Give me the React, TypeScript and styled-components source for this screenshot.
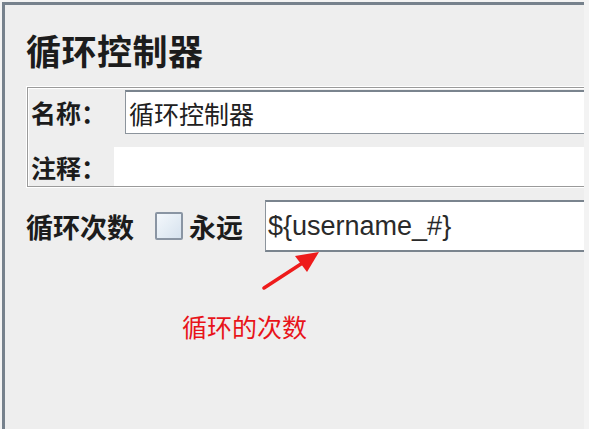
import React from "react";
import styled, { createGlobalStyle } from "styled-components";

const Global = createGlobalStyle`
  html, body { margin: 0; padding: 0; background: #f3f3f3; }
  body { width: 589px; height: 429px; overflow: hidden; }
`;

const CJK = `"Noto Sans CJK SC", "Noto Sans", sans-serif`;

const Page = styled.div`
  width: 589px;
  height: 429px;
  padding: 2px 0 0 2px;
  box-sizing: border-box;
  background: #f3f3f3;
`;

const Panel = styled.div`
  width: 582px;
  height: 427px;
  box-sizing: border-box;
  border-top: 3px solid #76818c;
  border-left: 3px solid #76818c;
  background: #eeeeee;
  overflow: hidden;
  display: flex;
  flex-direction: column;
  padding: 0 0 0 21px;
`;

const Title = styled.h1`
  margin: 23px 0 0 0;
  font-family: ${CJK};
  font-size: 35px;
  line-height: 44px;
  font-weight: 700;
  color: #1c1c1c;
  letter-spacing: 0.5px;
`;

const Box = styled.div`
  margin: 15px -20px 0 1px;
  border: 1px solid #9a9a9a;
  box-shadow: inset 1px 1px 0 #ffffff;
  outline: 1px solid #ffffff;
  display: flex;
  flex-direction: column;
  padding: 2px 0 0 3px;
`;

const Row = styled.div<{ $mt?: number }>`
  display: flex;
  align-items: center;
  margin-top: ${(p) => p.$mt ?? 0}px;
`;

const Label = styled.span<{ $w?: number; $size?: number }>`
  font-family: ${CJK};
  font-size: ${(p) => p.$size ?? 26}px;
  font-weight: 700;
  color: #1c1c1c;
  width: ${(p) => (p.$w ? `${p.$w}px` : "auto")};
  flex: none;
  white-space: nowrap;
`;

const NameInput = styled.div`
  flex: 1;
  height: 44px;
  box-sizing: border-box;
  background: #ffffff;
  border: 1px solid #8c949c;
  border-top: 2px solid #7a848e;
  display: flex;
  align-items: center;
  padding-left: 3px;
  font-family: ${CJK};
  font-size: 25px;
  color: #202020;
`;

const CommentArea = styled.div`
  flex: 1;
  height: 39px;
  background: #ffffff;
`;

const LoopRow = styled.div`
  display: flex;
  align-items: center;
  margin-top: 13px;
  margin-right: -20px;
  height: 52px;
`;

const Check = styled.span`
  width: 24px;
  height: 24px;
  border: 2px solid #8a95a3;
  border-radius: 2px;
  background: linear-gradient(135deg, #f4f8fc 0%, #d6e2ee 100%);
  margin: 0 6px 0 21px;
  flex: none;
`;

const Field = styled.div`
  flex: 1;
  height: 52px;
  box-sizing: border-box;
  margin-left: 22px;
  background: #ffffff;
  border: 1px solid #8c949c;
  border-top: 2px solid #7a848e;
  border-bottom: 2px solid #7a848e;
  display: flex;
  align-items: center;
  padding-left: 2px;
  font-family: "Liberation Sans", Arial, sans-serif;
  font-size: 27px;
  color: #2a2a2a;
`;

const Annotation = styled.div`
  position: relative;
  height: 110px;
`;

const Arrow = styled.svg`
  position: absolute;
  left: 236px;
  top: -2px;
`;

const Note = styled.div`
  margin: 59px 0 0 156px;
  font-family: ${CJK};
  font-size: 25px;
  color: #e8141a;
  line-height: 30px;
`;

export default function App() {
  return (
    <>
      <Global />
      <Page>
        <Panel>
          <Title>循环控制器</Title>
          <Box>
            <Row>
              <Label $w={94} $size={25}>名称：</Label>
              <NameInput>循环控制器</NameInput>
            </Row>
            <Row $mt={13}>
              <Label $w={83} $size={25}>注释：</Label>
              <CommentArea />
            </Row>
          </Box>
          <LoopRow>
            <Label $size={27}>循环次数</Label>
            <Check />
            <Label $size={27}>永远</Label>
            <Field>{"${username_#}"}</Field>
          </LoopRow>
          <Annotation>
            <Arrow width="60" height="42" viewBox="0 0 60 42">
              <line x1="2" y1="38" x2="42" y2="12" stroke="#ee1b1b" strokeWidth="3.5" strokeLinecap="round" />
              <polygon points="57,2 33,6 45,22" fill="#ee1b1b" />
            </Arrow>
            <Note>循环的次数</Note>
          </Annotation>
        </Panel>
      </Page>
    </>
  );
}
